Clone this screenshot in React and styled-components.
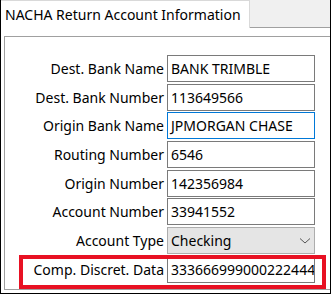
import { Fragment } from 'react';
import styled, { createGlobalStyle } from 'styled-components';

const Global = createGlobalStyle`
    body{
        margin: 0;
        background: #fff;
        font-family: "Noto Sans", "Open Sans", sans-serif;
    }
`

const Frame = styled.div`
    position: relative;
    width: 331px;
    height: 294px;
    box-sizing: border-box;
    border-left: 1px solid #000;
    border-right: 1px solid #000;
    border-bottom: 1px solid #000;
    overflow: hidden;
    display: flex;
    flex-direction: column;
`

const TabStrip = styled.div`
    height: 28px;
    display: flex;
    background: #f0f0f0;
    border-bottom: 1px solid #a0a0a0;
    box-sizing: border-box;
`

const Tab = styled.div`
    width: 249px;
    height: 28px;
    box-sizing: border-box;
    background: #fff;
    border-top: 1px solid #d9d9d9;
    border-right: 1px solid #d9d9d9;
    padding: 4px 0 0 4px;
    font-size: 14px;
    color: #000;
`

const Body = styled.div`
    flex: 1;
    padding: 8px 0 3px 3px;
`

const Panel = styled.div`
    height: 100%;
    box-sizing: border-box;
    border: 1px solid #a0a0a0;
    border-right: none;
    padding: 18px 0 0 0;
    display: grid;
    grid-template-columns: 159px 148px;
    column-gap: 3px;
    row-gap: 1.7px;
    grid-auto-rows: 27px;
    align-content: start;
`

const Label = styled.div`
    font-size: 14px;
    color: #000;
    text-align: right;
    line-height: 27px;
    white-space: nowrap;
`

const Field = styled.div`
    box-sizing: border-box;
    border: 1px solid ${p => p.$focused ? '#0078d7' : '#7a7a7a'};
    padding: 0 3px;
    font-size: 14px;
    line-height: 25px;
    color: #000;
    white-space: nowrap;
    overflow: hidden;
`

const Combo = styled.div`
    box-sizing: border-box;
    border: 1px solid #adadad;
    background: #e5e5e5;
    padding: 0 3px;
    font-size: 14px;
    line-height: 25px;
    display: flex;
    justify-content: space-between;
    align-items: center;
`

const Highlight = styled.div`
    position: absolute;
    left: 18px;
    top: 255px;
    width: 307px;
    height: 34px;
    box-sizing: border-box;
    border: 4px solid #e81123;
    pointer-events: none;
`

const rows = [
    ['Dest. Bank Name', 'BANK TRIMBLE'],
    ['Dest. Bank Number', '113649566'],
    ['Origin Bank Name', 'JPMORGAN CHASE', true],
    ['Routing Number', '6546'],
    ['Origin Number', '142356984'],
    ['Account Number', '33941552'],
]

function App() {
    return (
        <Frame>
            <Global />
            <TabStrip>
                <Tab>NACHA Return Account Information</Tab>
            </TabStrip>
            <Body>
                <Panel>
                    {rows.map(r => (
                        <Fragment key={r[0]}>
                            <Label>{r[0]}</Label>
                            <Field $focused={r[2]}>{r[1]}</Field>
                        </Fragment>
                    ))}
                    <Label>Account Type</Label>
                    <Combo>
                        <span>Checking</span>
                        <svg width="12" height="8" viewBox="0 0 12 8">
                            <path d="M1 1.5 L6 6 L11 1.5" fill="none" stroke="#555" strokeWidth="1" />
                        </svg>
                    </Combo>
                    <Label>Comp. Discret. Data</Label>
                    <Field>333666999000222444</Field>
                </Panel>
            </Body>
            <Highlight />
        </Frame>
    );
}

export default App
